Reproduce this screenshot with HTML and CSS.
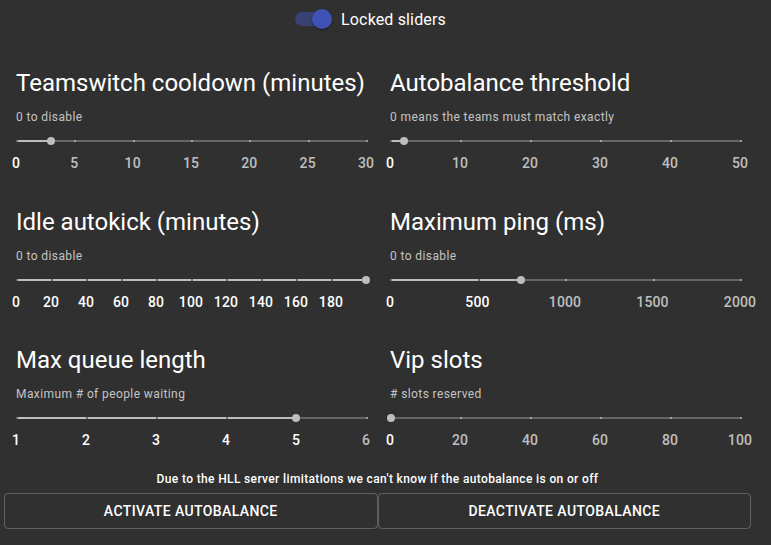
FILE: index.html
```html
<!DOCTYPE html>
<html>
<head>
<meta charset="utf-8">
<link rel="stylesheet" href="styles.css">
</head>
<body>
<div class="page">
  <div class="toggle-row">
    <label class="toggle">
      <span class="switch">
        <span class="switch-track"></span>
        <span class="switch-thumb"></span>
      </span>
      <span class="toggle-label">Locked sliders</span>
    </label>
  </div>

  <div class="settings">
    <section class="setting">
      <h2 class="title">Teamswitch cooldown (minutes)</h2>
      <p class="caption">0 to disable</p>
      <div class="slider">
        <span class="rail"></span>
        <span class="track" style="width:10%"></span>
        <span class="mark on" style="left:0%"></span>
        <span class="mark" style="left:16.667%"></span>
        <span class="mark" style="left:33.333%"></span>
        <span class="mark" style="left:50%"></span>
        <span class="mark" style="left:66.667%"></span>
        <span class="mark" style="left:83.333%"></span>
        <span class="mark" style="left:100%"></span>
        <span class="thumb" style="left:10%"></span>
        <span class="mlabel on" style="left:0%">0</span>
        <span class="mlabel" style="left:16.667%">5</span>
        <span class="mlabel" style="left:33.333%">10</span>
        <span class="mlabel" style="left:50%">15</span>
        <span class="mlabel" style="left:66.667%">20</span>
        <span class="mlabel" style="left:83.333%">25</span>
        <span class="mlabel" style="left:100%">30</span>
      </div>
    </section>

    <section class="setting">
      <h2 class="title">Autobalance threshold</h2>
      <p class="caption">0 means the teams must match exactly</p>
      <div class="slider">
        <span class="rail"></span>
        <span class="track" style="width:4%"></span>
        <span class="mark on" style="left:0%"></span>
        <span class="mark" style="left:20%"></span>
        <span class="mark" style="left:40%"></span>
        <span class="mark" style="left:60%"></span>
        <span class="mark" style="left:80%"></span>
        <span class="mark" style="left:100%"></span>
        <span class="thumb" style="left:4%"></span>
        <span class="mlabel on" style="left:0%">0</span>
        <span class="mlabel" style="left:20%">10</span>
        <span class="mlabel" style="left:40%">20</span>
        <span class="mlabel" style="left:60%">30</span>
        <span class="mlabel" style="left:80%">40</span>
        <span class="mlabel" style="left:100%">50</span>
      </div>
    </section>

    <section class="setting">
      <h2 class="title">Idle autokick (minutes)</h2>
      <p class="caption">0 to disable</p>
      <div class="slider">
        <span class="rail"></span>
        <span class="track" style="width:100%"></span>
        <span class="mark on" style="left:0%"></span>
        <span class="mark on" style="left:10%"></span>
        <span class="mark on" style="left:20%"></span>
        <span class="mark on" style="left:30%"></span>
        <span class="mark on" style="left:40%"></span>
        <span class="mark on" style="left:50%"></span>
        <span class="mark on" style="left:60%"></span>
        <span class="mark on" style="left:70%"></span>
        <span class="mark on" style="left:80%"></span>
        <span class="mark on" style="left:90%"></span>
        <span class="thumb" style="left:100%"></span>
        <span class="mlabel on" style="left:0%">0</span>
        <span class="mlabel on" style="left:10%">20</span>
        <span class="mlabel on" style="left:20%">40</span>
        <span class="mlabel on" style="left:30%">60</span>
        <span class="mlabel on" style="left:40%">80</span>
        <span class="mlabel on" style="left:50%">100</span>
        <span class="mlabel on" style="left:60%">120</span>
        <span class="mlabel on" style="left:70%">140</span>
        <span class="mlabel on" style="left:80%">160</span>
        <span class="mlabel on" style="left:90%">180</span>
      </div>
    </section>

    <section class="setting">
      <h2 class="title">Maximum ping (ms)</h2>
      <p class="caption">0 to disable</p>
      <div class="slider">
        <span class="rail"></span>
        <span class="track" style="width:37.5%"></span>
        <span class="mark on" style="left:0%"></span>
        <span class="mark on" style="left:25%"></span>
        <span class="mark" style="left:50%"></span>
        <span class="mark" style="left:75%"></span>
        <span class="mark" style="left:100%"></span>
        <span class="thumb" style="left:37.5%"></span>
        <span class="mlabel on" style="left:0%">0</span>
        <span class="mlabel on" style="left:25%">500</span>
        <span class="mlabel" style="left:50%">1000</span>
        <span class="mlabel" style="left:75%">1500</span>
        <span class="mlabel" style="left:100%">2000</span>
      </div>
    </section>

    <section class="setting">
      <h2 class="title">Max queue length</h2>
      <p class="caption">Maximum # of people waiting</p>
      <div class="slider">
        <span class="rail"></span>
        <span class="track" style="width:80%"></span>
        <span class="mark on" style="left:0%"></span>
        <span class="mark on" style="left:20%"></span>
        <span class="mark on" style="left:40%"></span>
        <span class="mark on" style="left:60%"></span>
        <span class="mark" style="left:100%"></span>
        <span class="thumb" style="left:80%"></span>
        <span class="mlabel on" style="left:0%">1</span>
        <span class="mlabel on" style="left:20%">2</span>
        <span class="mlabel on" style="left:40%">3</span>
        <span class="mlabel on" style="left:60%">4</span>
        <span class="mlabel on" style="left:80%">5</span>
        <span class="mlabel" style="left:100%">6</span>
      </div>
    </section>

    <section class="setting">
      <h2 class="title">Vip slots</h2>
      <p class="caption"># slots reserved</p>
      <div class="slider">
        <span class="rail"></span>
        <span class="mark" style="left:20%"></span>
        <span class="mark" style="left:40%"></span>
        <span class="mark" style="left:60%"></span>
        <span class="mark" style="left:80%"></span>
        <span class="mark" style="left:100%"></span>
        <span class="thumb" style="left:0.3%"></span>
        <span class="mlabel on" style="left:0%">0</span>
        <span class="mlabel" style="left:20%">20</span>
        <span class="mlabel" style="left:40%">40</span>
        <span class="mlabel" style="left:60%">60</span>
        <span class="mlabel" style="left:80%">80</span>
        <span class="mlabel" style="left:100%">100</span>
      </div>
    </section>
  </div>

  <div class="autobalance">
    <p class="note">Due to the HLL server limitations we can't know if the autobalance is on or off</p>
    <div class="buttons">
      <button class="btn">Activate autobalance</button>
      <button class="btn">Deactivate autobalance</button>
    </div>
  </div>
</div>
</body>
</html>
```

FILE: styles.css
```css
* { box-sizing: border-box; }

html, body {
  margin: 0;
  padding: 0;
  background: #303030;
}

body {
  font-family: Roboto, "Liberation Sans", sans-serif;
  color: #fff;
  width: 771px;
  height: 545px;
  overflow: hidden;
}

.page {
  display: flex;
  flex-direction: column;
}

/* top toggle */
.toggle-row {
  display: flex;
  justify-content: center;
  padding-right: 42px;
  height: 38px;
}

.toggle {
  display: flex;
  align-items: center;
}

.switch {
  position: relative;
  width: 58px;
  height: 38px;
  display: block;
}

.switch-track {
  position: absolute;
  left: 12px;
  top: 12px;
  width: 34px;
  height: 14px;
  border-radius: 7px;
  background: #3f51b5;
  opacity: 0.5;
}

.switch-thumb {
  position: absolute;
  left: 29px;
  top: 9px;
  width: 20px;
  height: 20px;
  border-radius: 50%;
  background: #3f51b5;
  box-shadow: 0 2px 1px -1px rgba(0,0,0,0.2), 0 1px 1px 0 rgba(0,0,0,0.14), 0 1px 3px 0 rgba(0,0,0,0.12);
}

.toggle-label {
  font-size: 16px;
  line-height: 1.5;
  letter-spacing: 0.00938em;
  padding-top: 1px;
}

/* settings grid */
.settings {
  margin-top: 29px;
  padding-left: 16px;
  display: grid;
  grid-template-columns: 350px 350px;
  column-gap: 24px;
  row-gap: 30.5px;
}

.setting {
  display: flex;
  flex-direction: column;
}

.title {
  margin: 0;
  font-size: 24px;
  font-weight: 400;
  line-height: 32px;
  white-space: nowrap;
}

.caption {
  margin: 8px 0 0;
  font-size: 12px;
  line-height: 20px;
  letter-spacing: 0.03333em;
  color: rgba(255,255,255,0.72);
}

/* slider */
.slider {
  position: relative;
  height: 28px;
  margin-bottom: 20px;
  color: #bdbdbd;
}

.rail, .track, .mark, .thumb, .mlabel {
  position: absolute;
}

.rail {
  left: 0;
  top: 13px;
  width: 100%;
  height: 2px;
  background: #bdbdbd;
  opacity: 0.38;
}

.track {
  left: 0;
  top: 13px;
  height: 2px;
  background: #bdbdbd;
}

.mark {
  top: 13px;
  width: 2px;
  height: 2px;
  border-radius: 1px;
  background: #bdbdbd;
}

.mark.on {
  background: #3a3a3a;
  opacity: 0.8;
}

.thumb {
  top: 10px;
  width: 8px;
  height: 8px;
  margin-left: -4px;
  border-radius: 50%;
  background: #bdbdbd;
}

.mlabel {
  top: 26px;
  transform: translateX(-50%);
  font-size: 14px;
  font-weight: 500;
  line-height: 20px;
  letter-spacing: 0.01071em;
  color: rgba(255,255,255,0.7);
  white-space: nowrap;
}

.mlabel.on {
  color: #fff;
}

/* autobalance */
.autobalance {
  margin: 17px 0 0 4px;
  width: 747px;
  display: flex;
  flex-direction: column;
  align-items: center;
}

.note {
  margin: 0 0 4px;
  font-size: 12px;
  font-weight: 500;
  line-height: 20px;
  letter-spacing: 0.36px;
  color: #fff;
}

.buttons {
  display: flex;
  width: 100%;
}

.btn {
  flex: 1 1 0;
  height: 36px;
  padding: 5px 15px;
  border: 1px solid rgba(255,255,255,0.23);
  border-radius: 4px;
  background: transparent;
  color: #fff;
  font-family: Roboto, "Liberation Sans", sans-serif;
  font-size: 14px;
  font-weight: 500;
  letter-spacing: 0.02857em;
  text-transform: uppercase;
  line-height: 1.75;
}
```
